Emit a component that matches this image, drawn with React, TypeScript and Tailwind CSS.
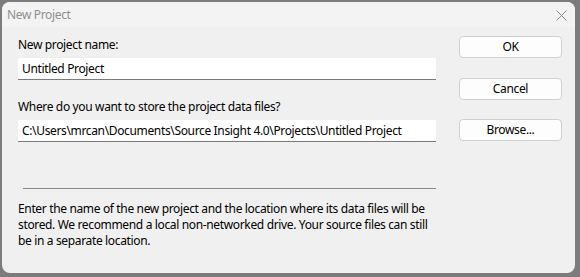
function Field({ value }: { value: string }) {
  return (
    <div className="flex h-[22px] items-center border-b border-[#7a7a7a] bg-white pl-[4px] text-black">
      {value}
    </div>
  );
}

function Btn({ label, className = "" }: { label: string; className?: string }) {
  return (
    <button
      className={`flex h-[22px] w-[103px] items-center justify-center rounded-[4px] border border-[#d0d0d0] bg-[#fdfdfd] text-black ${className}`}
    >
      {label}
    </button>
  );
}

export default function App() {
  return (
    <div className="h-[277px] w-[580px] overflow-hidden bg-[#7c7c7c] pl-[2px] pt-[2px] text-[12px] leading-[16px] tracking-[-0.35px] font-['Noto_Sans',sans-serif]">
      <div className="flex h-[271px] w-[573px] flex-col rounded-[8px] bg-[#f0f0f0]">
        <div className="flex h-[25px] items-center justify-between rounded-t-[8px] bg-[#f3f3f3] pl-[5px] pr-[8px] text-[#8f8f8f]">
          <span>New Project</span>
          <svg width="11" height="11" viewBox="0 0 11 11" className="mt-[1px]">
            <path d="M0.5 0.5 L10.5 10.5 M10.5 0.5 L0.5 10.5" stroke="#8a8a8a" strokeWidth="1" fill="none" />
          </svg>
        </div>

        <div className="flex pl-[16px]">
          <div className="flex w-[418px] flex-col">
            <p className="mt-[10px] text-black">New project name:</p>
            <div className="mt-[5px]">
              <Field value="Untitled Project" />
            </div>
            <p className="mt-[19px] text-black">Where do you want to store the project data files?</p>
            <div className="mt-[5px]">
              <Field value="C:\Users\mrcan\Documents\Source Insight 4.0\Projects\Untitled Project" />
            </div>
            <div className="ml-[5px] mt-[46px] h-px bg-[#8a8a8a]" />
            <div className="mt-[12px] flex flex-col whitespace-nowrap text-black">
              <span>Enter the name of the new project and the location where its data files will be</span>
              <span>stored. We recommend a local non-networked drive. Your source files can still</span>
              <span>be in a separate location.</span>
            </div>
          </div>

          <div className="ml-[23px] flex flex-col">
            <Btn label="OK" className="mt-[9px]" />
            <Btn label="Cancel" className="mt-[20px]" />
            <Btn label="Browse..." className="mt-[19px]" />
          </div>
        </div>
      </div>
    </div>
  );
}
